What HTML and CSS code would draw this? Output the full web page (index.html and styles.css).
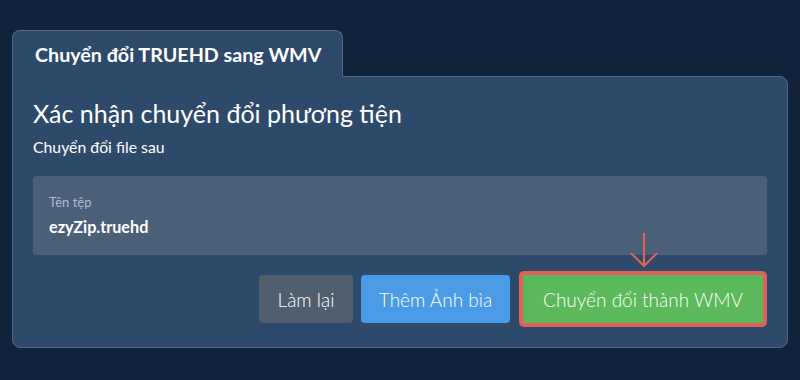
FILE: index.html
```html
<!DOCTYPE html>
<html lang="vi">
<head>
<meta charset="utf-8">
<link rel="stylesheet" href="styles.css">
</head>
<body>
<div class="card">
  <div class="tab">Chuyển đổi TRUEHD sang WMV</div>
  <div class="panel">
    <h1 class="title">Xác nhận chuyển đổi phương tiện</h1>
    <p class="subtitle">Chuyển đổi file sau</p>
    <div class="file-box">
      <div class="file-label">Tên tệp</div>
      <div class="file-name">ezyZip.truehd</div>
    </div>
    <div class="actions">
      <button class="btn btn-grey">Làm lại</button>
      <button class="btn btn-blue">Thêm Ảnh bìa</button>
      <div class="convert-wrap">
        <svg class="arrow" width="30" height="36" viewBox="0 0 30 36">
          <path d="M15 1 V34 M2 21 L15 34 L28 21" fill="none" stroke="#e0605a" stroke-width="2.2"/>
        </svg>
        <button class="btn btn-green">Chuyển đổi thành WMV</button>
      </div>
    </div>
  </div>
</div>
</body>
</html>
```

FILE: styles.css
```css
html, body {
  margin: 0;
  padding: 0;
  background: #10233a;
  font-family: Lato, "Noto Sans", sans-serif;
  color: #ffffff;
}
body {
  padding: 30px 12px 0 12px;
  height: 380px;
  box-sizing: border-box;
}
.card {
  width: 776px;
}
.tab {
  position: relative;
  z-index: 1;
  box-sizing: border-box;
  width: 331px;
  height: 47px;
  margin-bottom: -1px;
  padding: 13px 0 0 22px;
  background: #2d4a6b;
  border: 1px solid #4d6789;
  border-bottom: none;
  border-radius: 8px 8px 0 0;
  font-size: 19.7px;
  font-weight: 700;
  line-height: 22px;
}
.panel {
  box-sizing: border-box;
  height: 272px;
  background: #2d4a6b;
  border: 1px solid #4d6789;
  border-radius: 0 8px 8px 8px;
  padding: 19px 20px 20px 20px;
}
.title {
  margin: 0;
  font-size: 25px;
  font-weight: 400;
  line-height: 34px;
}
.subtitle {
  margin: 7px 0 0 0;
  font-size: 15.8px;
  line-height: 20px;
}
.file-box {
  margin-top: 19px;
  height: 79px;
  box-sizing: border-box;
  background: #4a5f78;
  border-radius: 4px;
  padding: 17px 0 0 16px;
}
.file-label {
  font-size: 13px;
  line-height: 18px;
  color: #b3bdc9;
}
.file-name {
  margin-top: 6px;
  font-size: 16.2px;
  font-weight: 700;
  line-height: 20px;
}
.actions {
  display: flex;
  justify-content: flex-end;
  align-items: center;
  gap: 8px;
  margin-top: 16px;
}
.btn {
  font-family: Lato, "Noto Sans", sans-serif;
  font-size: 19px;
  font-weight: 300;
  color: #ffffff;
  border: none;
  border-radius: 4px;
  height: 48px;
  padding: 0;
  cursor: pointer;
}
.btn-grey {
  width: 94px;
  background: #4f5f70;
}
.btn-blue {
  width: 149px;
  background: #4b9be6;
}
.convert-wrap {
  position: relative;
  margin-left: 1px;
}
.btn-green {
  display: block;
  width: 248px;
  height: 56px;
  background: #5cb85c;
  border: 4px solid #e0605a;
  border-radius: 5px;
}
.arrow {
  position: absolute;
  left: 110px;
  top: -39px;
}
```
